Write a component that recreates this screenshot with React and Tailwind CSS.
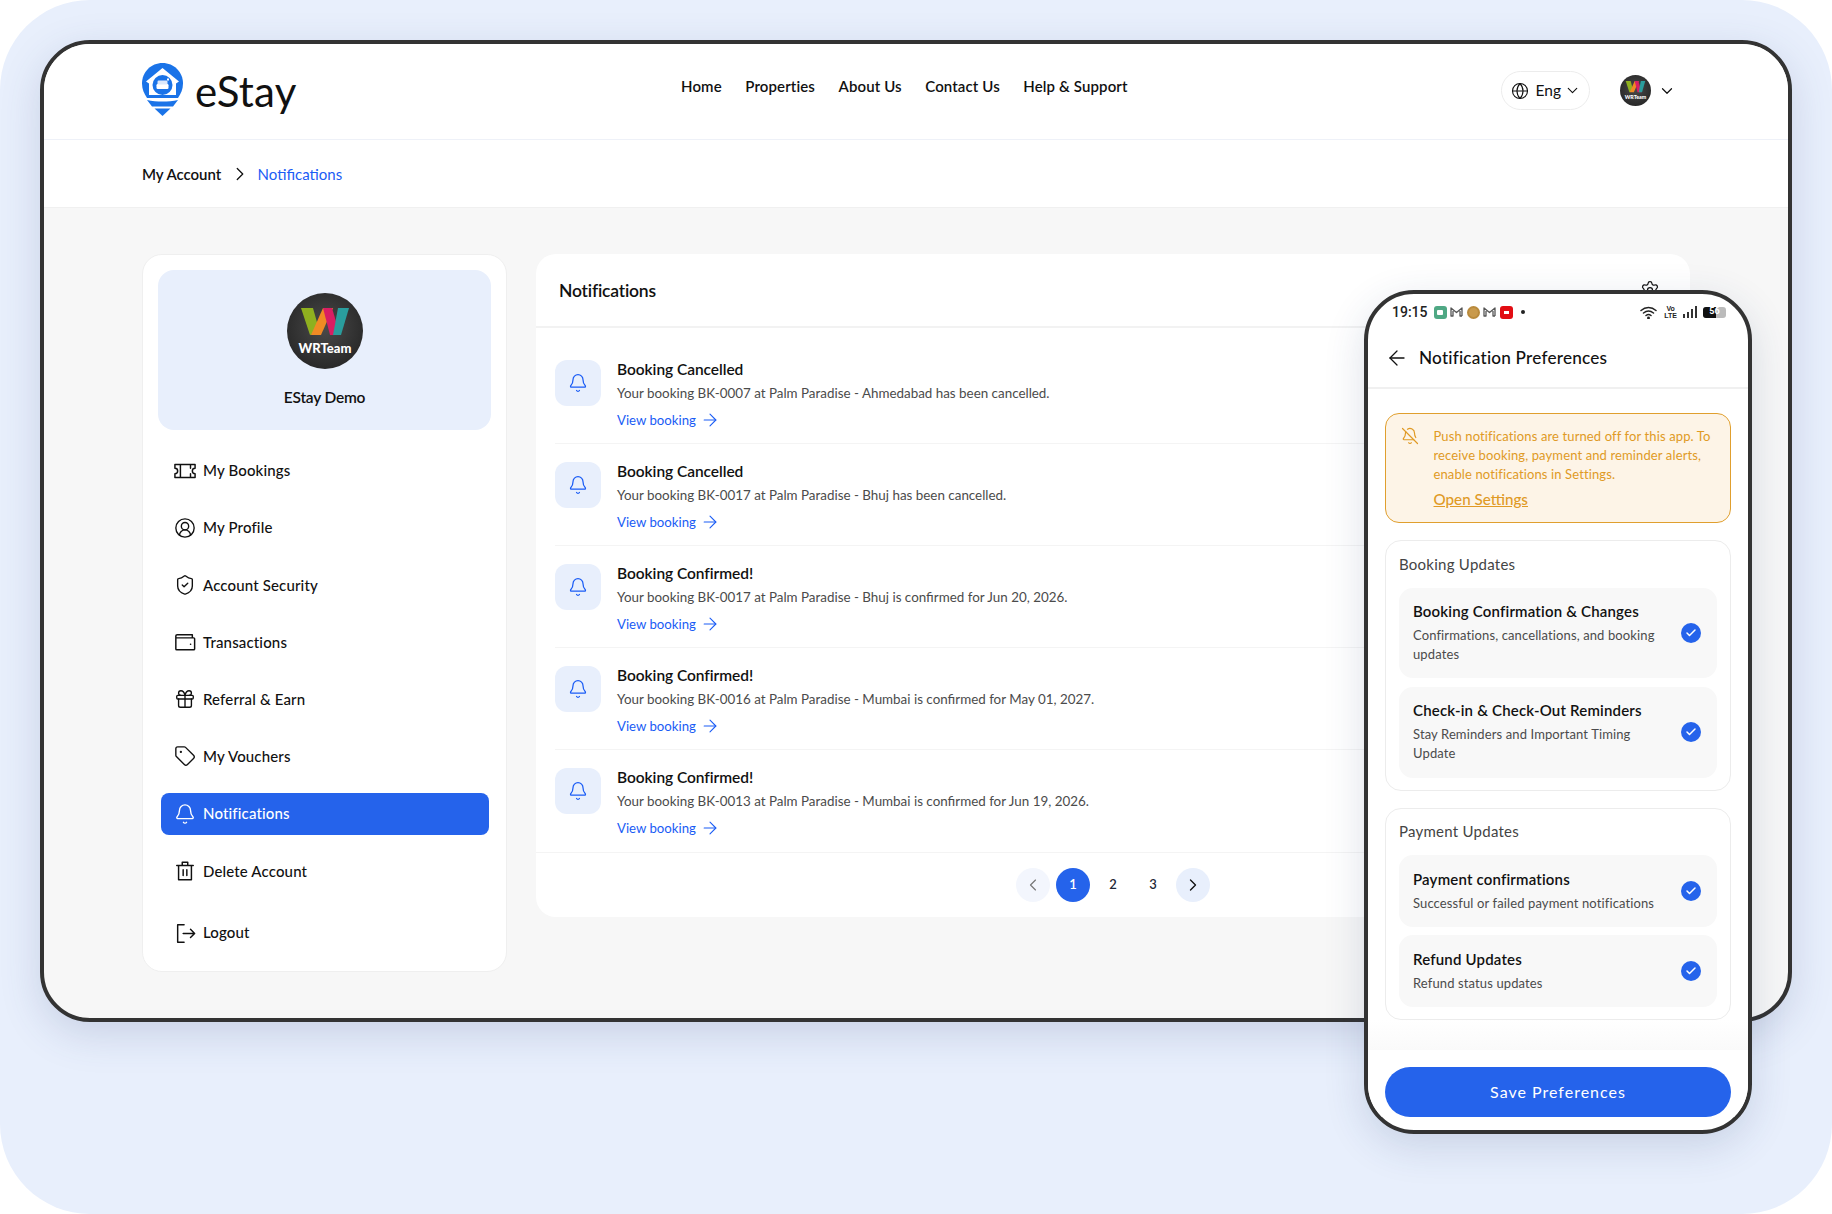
import React from "react";
import { Bell, ChevronDown, ChevronLeft, ChevronRight, CircleUserRound, Gift, Globe, ShieldCheck, Tag, ArrowRight, ArrowLeft, BellOff, Check, Settings } from "lucide-react";

const Avatar = ({ size }) => (
  <svg width={size} height={size} viewBox="0 0 76 76" className="shrink-0">
    <defs>
      <radialGradient id={`g${size}`} cx="50%" cy="45%" r="60%">
        <stop offset="0%" stopColor="#4a4a4a" />
        <stop offset="100%" stopColor="#262626" />
      </radialGradient>
    </defs>
    <circle cx="38" cy="38" r="38" fill={`url(#g${size})`} />
    <polygon points="14,15 26,15 33,40 23,42" fill="#8fb01f" />
    <polygon points="24,42 36,15 46,15 34,42" fill="#f08a24" />
    <polygon points="36,15 45,15 53,42 43,42" fill="#d91e63" />
    <polygon points="46,42 51,15 62,15 54,42" fill="#2a9d9d" />
    <text x="38" y="60" textAnchor="middle" fontFamily="Lato,sans-serif" fontWeight="900" fontSize="13" fill="#fff">WRTeam</text>
  </svg>
);

const Logo = () => (
  <svg width="41" height="53" viewBox="0 0 41 53" className="shrink-0">
    <path d="M20.5 0C32 0 41 9 41 20.5C41 26 39 30.5 36 35L5 35C2 30.5 0 26 0 20.5C0 9 9 0 20.5 0Z" fill="#1a73e8" />
    <path d="M20.5 5L37 18.5L34 20.5V32H7V20.5L4 18.5Z" fill="#fff" />
    <circle cx="20.5" cy="22" r="10" fill="#1a73e8" />
    <rect x="14.5" y="21" width="12" height="5" rx="1.2" fill="#fff" />
    <rect x="15.5" y="17.5" width="10" height="4" rx="1.2" fill="#dbe8fb" />
    <rect x="25" y="15.5" width="2" height="2" fill="#fff" />
    <path d="M5 37C15 39 26 39 36 37L31 43.5H10Z" fill="#1a73e8" />
    <polygon points="12.5,45.5 28.5,45.5 20.5,53" fill="#1a73e8" />
  </svg>
);

const Ticket = (p) => (
  <svg {...p} viewBox="0 0 24 24" fill="none" stroke="currentColor" strokeWidth="1.6" strokeLinejoin="round" strokeLinecap="round">
    <path d="M1 5H23V9A3 3 0 0 0 23 15V19H1V15A3 3 0 0 0 1 9ZM7 5V19M18 5V9M18 15V19" />
  </svg>
);
const WalletI = (p) => (
  <svg {...p} viewBox="0 0 24 24" fill="none" stroke="currentColor" strokeWidth="1.6" strokeLinejoin="round" strokeLinecap="round">
    <path d="M2 7.5V19.5A1 1 0 0 0 3 20.5H21.5A1 1 0 0 0 22.5 19.5V8.5A1 1 0 0 0 21.5 7.5H2ZM2 7.5V5.5A1.5 1.5 0 0 1 3.5 4H20V7.5M18 14.5H18.2" />
  </svg>
);
const TrashI = (p) => (
  <svg {...p} viewBox="0 0 24 24" fill="none" stroke="currentColor" strokeWidth="1.6" strokeLinejoin="round" strokeLinecap="round">
    <path d="M3 6H21M5 6V21.5H19V6M9 6V2.5H15V6M10 10.5V17M14 10.5V17" />
  </svg>
);
const LogoutI = (p) => (
  <svg {...p} viewBox="0 0 24 24" fill="none" stroke="currentColor" strokeWidth="1.6" strokeLinejoin="round" strokeLinecap="round">
    <path d="M11 3H4V22H11M10 12.5H22.5M18 8L22.5 12.5L18 17" />
  </svg>
);

const menu = [
  ["My Bookings", Ticket],
  ["My Profile", CircleUserRound],
  ["Account Security", ShieldCheck],
  ["Transactions", WalletI],
  ["Referral & Earn", Gift],
  ["My Vouchers", Tag],
  ["Notifications", Bell],
  ["Delete Account", TrashI],
  ["Logout", LogoutI],
];

const rows = [
  ["Booking Cancelled", "Your booking BK-0007 at Palm Paradise - Ahmedabad has been cancelled."],
  ["Booking Cancelled", "Your booking BK-0017 at Palm Paradise - Bhuj has been cancelled."],
  ["Booking Confirmed!", "Your booking BK-0017 at Palm Paradise - Bhuj is confirmed for Jun 20, 2026."],
  ["Booking Confirmed!", "Your booking BK-0016 at Palm Paradise - Mumbai is confirmed for May 01, 2027."],
  ["Booking Confirmed!", "Your booking BK-0013 at Palm Paradise - Mumbai is confirmed for Jun 19, 2026."],
];

const GmailI = () => (
  <svg width="13" height="10" viewBox="0 0 13 10" fill="none" stroke="#555" strokeWidth="1.3" strokeLinejoin="round">
    <path d="M1 9V1L6.5 5.5L12 1V9M1 1L1 9H3V4M12 9H10V4" />
  </svg>
);

const PrefItem = ({ title, lines, h, pt }) => (
  <div className={`flex items-center justify-between bg-[#f8f8f8] rounded-[14px] pl-[14px] pr-[16px] ${h}`}>
    <div className={`self-start ${pt}`}>
      <div className="text-[15px] leading-[22px] font-semibold text-[#111] whitespace-nowrap tracking-[0.18px]">{title}</div>
      <div className="mt-[4px] text-[13px] leading-[19px] text-[#4b4b4b] whitespace-nowrap tracking-[0.12px]">
        {lines.map((l) => (
          <div key={l}>{l}</div>
        ))}
      </div>
    </div>
    <div className="w-[20px] h-[20px] rounded-full bg-[#2563eb] flex items-center justify-center shrink-0">
      <Check size={12} color="#fff" strokeWidth={3} />
    </div>
  </div>
);

const PrefCard = ({ title, children, gap }) => (
  <div className="border border-[#ececec] rounded-[16px] px-[13px] pt-[12px] pb-[12px]">
    <div className="text-[15px] leading-[22px] text-[#444] tracking-[0.25px] mt-[-0.5px] mb-[0.5px]">{title}</div>
    <div className={`mt-[13px] flex flex-col ${gap}`}>{children}</div>
  </div>
);

export default function App() {
  return (
    <div className="relative w-[1832px] h-[1214px] bg-[#e8effc] rounded-[90px] pt-[40px] px-[40px] overflow-hidden font-['Lato','Noto_Sans',sans-serif] text-[#111]">
      <div className="w-[1752px] h-[982px] border-4 border-[#333333] rounded-[50px] bg-[#f7f7f7] overflow-hidden shadow-[0_12px_40px_rgba(60,80,130,0.18)]">
        <header className="h-[96px] bg-white border-b border-[#eef1f8] flex items-center pl-[98px] relative">
          <div className="flex items-center gap-[12px] w-[539px] mt-[-4px]">
            <Logo />
            <span className="text-[42px] font-normal leading-none text-[#111] tracking-[0.2px] mt-[2px]">eStay</span>
          </div>
          <nav className="flex items-center gap-[23.5px] text-[15px] font-semibold text-[#111] mt-[-10px] whitespace-nowrap tracking-[0.12px]">
            <span>Home</span>
            <span>Properties</span>
            <span>About Us</span>
            <span>Contact Us</span>
            <span>Help &amp; Support</span>
          </nav>
          <div className="ml-auto mr-[112px] mt-[-2px] flex items-center">
            <div className="w-[89px] h-[39px] border border-[#ececec] rounded-full flex items-center pl-[9px]">
              <Globe size={18} strokeWidth={1.5} />
              <span className="ml-[7px] text-[15.5px]">Eng</span>
              <ChevronDown size={17} strokeWidth={1.6} className="ml-[3px]" />
            </div>
            <div className="ml-[30px]">
              <Avatar size={31} />
            </div>
            <ChevronDown size={18} strokeWidth={1.6} className="ml-[7.5px]" />
          </div>
        </header>
        <div className="h-[68px] bg-white border-b border-[#f0f0f0] flex items-center pl-[98px] text-[15px]">
          <span className="font-semibold tracking-[-0.05px] mt-[1px]">My Account</span>
          <ChevronRight size={22} strokeWidth={1.4} className="ml-[8px] mt-[1px]" />
          <span className="ml-[6.5px] text-[#1a5cf5] mt-[1px]">Notifications</span>
        </div>
        <div className="flex items-start pt-[46px] pl-[98px] gap-[29px]">
          <aside className="w-[365px] h-[718px] bg-white border border-[#efefef] rounded-[20px] px-[15px] pt-[15px]">
            <div className="h-[160px] bg-[#e8effc] rounded-[16px] flex flex-col items-center pt-[23px]">
              <Avatar size={76} />
              <div className="mt-[16.5px] text-[15.5px] leading-[22px] font-semibold tracking-[-0.2px]">EStay Demo</div>
            </div>
            <div className="mt-[19.5px] px-[2.5px] flex flex-col gap-[15.2px]">
              {menu.map(([label, Icon]) => {
                const active = label === "Notifications";
                return (
                  <div
                    key={label}
                    className={`h-[42px] rounded-[8px] flex items-center gap-[8px] pl-[14.5px] pr-[14px] text-[15px] font-medium ${active ? "bg-[#2563eb] text-white" : "text-[#111]"} ${label === "Logout" ? "mt-[4.5px]" : ""}`}
                  >
                    <Icon width={22} height={22} strokeWidth={1.5} className="mx-[-1px] shrink-0" />
                    <span className="tracking-[0.15px]">{label}</span>
                  </div>
                );
              })}
            </div>
          </aside>
          <main className="w-[1154px] h-[663px] bg-white rounded-[20px]">
            <div className="h-[74px] border-b-2 border-[#f2f2f2] flex items-center justify-between pl-[23px] pr-[30px]">
              <span className="text-[17.5px] font-semibold tracking-[-0.2px] mt-[2px]">Notifications</span>
              <Settings size={20} strokeWidth={1.5} />
            </div>
            <div className="pt-[14px] px-[19px]">
              {rows.map(([t, b], i) => (
                <div key={i} className={`h-[102px] pt-[18px] flex gap-[16px] ${i < 4 ? "border-b border-[#f4f4f4]" : ""}`}>
                  <div className="w-[46px] h-[46px] rounded-[12px] bg-[#e8effc] flex items-center justify-center shrink-0">
                    <Bell size={20} color="#1a5cf5" strokeWidth={1.5} />
                  </div>
                  <div>
                    <div className="text-[15.5px] leading-[20px] font-semibold tracking-[-0.05px] mt-[-1px] mb-[1px]">{t}</div>
                    <div className="mt-[4px] text-[13.4px] leading-[20px] text-[#4b4b4b]">{b}</div>
                    <div className="mt-[6.5px] flex items-center gap-[4px] text-[13.2px] leading-[20px] text-[#1a5cf5]">
                      View booking <ArrowRight size={20} strokeWidth={1.3} />
                    </div>
                  </div>
                </div>
              ))}
            </div>
            <div className="h-[65px] border-t border-[#f4f4f4] flex items-center justify-center gap-[6px] text-[13px] font-semibold">
              <div className="w-[34px] h-[34px] rounded-full bg-[#f3f6fd] flex items-center justify-center">
                <ChevronLeft size={20} strokeWidth={1.4} color="#777" />
              </div>
              <div className="w-[34px] h-[34px] rounded-full bg-[#2563eb] text-white flex items-center justify-center">1</div>
              <div className="w-[34px] h-[34px] flex items-center justify-center text-[#1f2937]">2</div>
              <div className="w-[34px] h-[34px] flex items-center justify-center text-[#1f2937]">3</div>
              <div className="w-[34px] h-[34px] rounded-full bg-[#e8effc] flex items-center justify-center">
                <ChevronRight size={20} strokeWidth={1.6} color="#111" />
              </div>
            </div>
          </main>
        </div>
      </div>

      <div className="absolute left-[1364px] top-[290px] w-[388px] h-[844px] bg-white border-4 border-[#333333] rounded-[50px] overflow-hidden shadow-[0_12px_40px_rgba(40,60,110,0.16)]">
        <div className="h-[36px] flex items-center pl-[24px] pr-[22px]">
          <span className="text-[14px] font-medium font-['Roboto',sans-serif] text-[#222]">19:15</span>
          <div className="ml-[6px] flex items-center gap-[3.5px]">
            <div className="w-[13px] h-[13px] rounded-[3px] bg-[#4fa884] flex items-center justify-center"><div className="w-[6px] h-[5px] bg-white rounded-[1px]" /></div>
            <GmailI />
            <div className="w-[13px] h-[13px] rounded-full bg-[#c99a4c] border-2 border-[#b98a3c]" />
            <GmailI />
            <div className="w-[13px] h-[13px] rounded-[3px] bg-[#e20d13] flex items-center justify-center"><div className="w-[5px] h-[3px] bg-white" /></div>
            <div className="ml-[5px] w-[4px] h-[4px] rounded-full bg-[#222]" />
          </div>
          <div className="ml-auto flex items-center gap-[6px]">
            <svg width="18" height="13" viewBox="0 0 18 13" fill="none" stroke="#222" strokeWidth="1.5" strokeLinecap="round">
              <path d="M1 4.5C5.5 0.5 11.5 0.5 16 4.5M3.5 7C6.5 4.5 10.5 4.5 13.5 7M6 9.5C7.5 8.4 9.5 8.4 11 9.5" />
              <circle cx="8.5" cy="12" r="0.7" fill="#222" />
            </svg>
            <div className="text-[7px] leading-[7px] font-bold text-center font-['Liberation_Sans',sans-serif] text-[#222]">Vo<br />LTE</div>
            <svg width="14" height="13" viewBox="0 0 14 13" fill="#333">
              <rect x="0" y="8" width="2" height="4" /><rect x="4" y="6" width="2" height="6" /><rect x="8" y="3" width="2" height="9" /><rect x="12" y="0" width="2" height="12" />
            </svg>
            <div className="w-[23px] h-[11px] rounded-[3px] bg-[#bbb] overflow-hidden flex items-center justify-center relative">
              <div className="absolute left-0 top-0 bottom-0 w-[13px] bg-[#111]" />
              <span className="relative text-[9px] font-bold text-white font-['Roboto',sans-serif]">56</span>
            </div>
          </div>
        </div>
        <div className="h-[59px] border-b-2 border-[#f0f0f0] flex items-center pl-[17px] gap-[10px]">
          <ArrowLeft size={24} strokeWidth={1.3} className="mt-[-1px]" />
          <span className="text-[17.2px] font-medium tracking-[0.2px] mt-[-2px]">Notification Preferences</span>
        </div>
        <div className="px-[17px] pt-[24px]">
          <div className="h-[110px] rounded-[14px] border border-[#e09f2e] bg-[#fdf4e7] flex pl-[15px] pt-[13px] text-[#e09a25]">
            <BellOff size={18} strokeWidth={1.6} className="shrink-0" />
            <div className="ml-[14.5px]">
              <div className="text-[13px] leading-[19px] tracking-[0.12px] whitespace-nowrap">
                <div>Push notifications are turned off for this app. To</div>
                <div>receive booking, payment and reminder alerts,</div>
                <div>enable notifications in Settings.</div>
              </div>
              <div className="mt-[3.5px] text-[15.2px] leading-[22px] underline font-medium">Open Settings</div>
            </div>
          </div>
          <div className="mt-[17px]">
            <PrefCard title="Booking Updates" gap="gap-[9px]">
              <PrefItem h="h-[90px]" pt="pt-[12px]" title="Booking Confirmation & Changes" lines={["Confirmations, cancellations, and booking", "updates"]} />
              <PrefItem h="h-[91px]" pt="pt-[12px]" title="Check-in & Check-Out Reminders" lines={["Stay Reminders and Important Timing", "Update"]} />
            </PrefCard>
          </div>
          <div className="mt-[17px]">
            <PrefCard title="Payment Updates" gap="gap-[8px]">
              <PrefItem h="h-[72px]" pt="pt-[13px]" title="Payment confirmations" lines={["Successful or failed payment notifications"]} />
              <PrefItem h="h-[72px]" pt="pt-[13px]" title="Refund Updates" lines={["Refund status updates"]} />
            </PrefCard>
          </div>
        </div>
        <div className="h-[29.5px] bg-gradient-to-b from-white to-[#fafafa]" />
        <div className="px-[17px] pt-[17px] bg-white">
          <div className="h-[50px] rounded-full bg-[#2563eb] text-white flex items-center justify-center text-[16px] tracking-[1px]">Save Preferences</div>
        </div>
      </div>
    </div>
  );
}
